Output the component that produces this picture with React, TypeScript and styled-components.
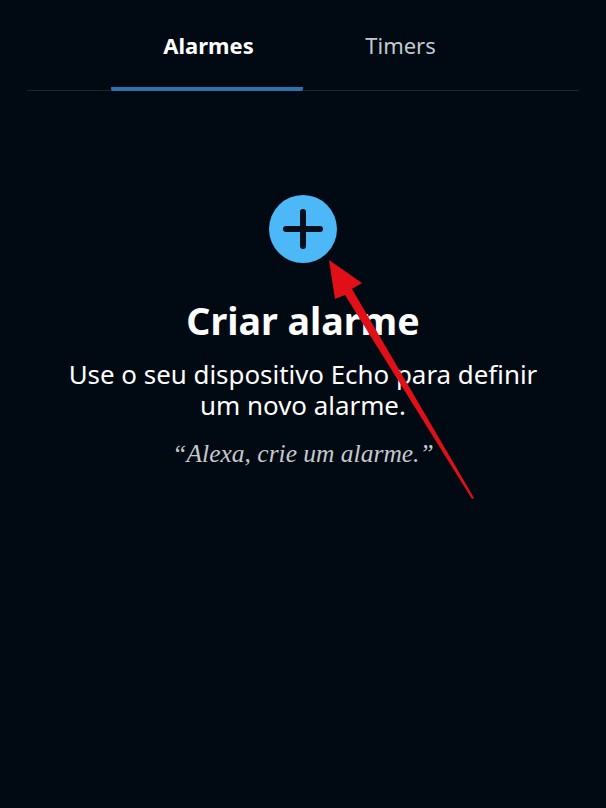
import styled, { createGlobalStyle } from "styled-components";

const GlobalStyle = createGlobalStyle`
  html, body {
    margin: 0;
    padding: 0;
    background: #010912;
  }
`;

const Screen = styled.div`
  position: relative;
  width: 606px;
  height: 808px;
  overflow: hidden;
  background: #010912;
  font-family: "Noto Sans", "Open Sans", sans-serif;
  color: #fff;
`;

const Tabs = styled.nav`
  display: flex;
  margin: 0 27px;
  padding-left: 84px;
  border-bottom: 1px solid #1d252e;
`;

const Tab = styled.div<{ $active?: boolean }>`
  width: 192px;
  height: 91px;
  box-sizing: border-box;
  padding: 30px 0 0 3px;
  margin-bottom: -1px;
  text-align: center;
  font-size: 22px;
  line-height: 30px;
  font-weight: ${(p) => (p.$active ? 700 : 400)};
  color: ${(p) => (p.$active ? "#fff" : "#c3c9d1")};
  border-bottom: ${(p) => (p.$active ? "4px solid #2a73ab" : "none")};
  border-radius: 0 0 2px 2px;
`;

const Empty = styled.section`
  display: flex;
  flex-direction: column;
  align-items: center;
  padding-top: 104px;
  text-align: center;
`;

const AddButton = styled.div`
  display: flex;
  align-items: center;
  justify-content: center;
  width: 68px;
  height: 68px;
  border-radius: 50%;
  background: #4db8f8;
`;

const Title = styled.h1`
  margin: 33px 0 0;
  font-size: 37.6px;
  line-height: 50px;
  font-weight: 700;
`;

const Description = styled.p`
  margin: 13px 0 0;
  width: 490px;
  font-size: 25.9px;
  line-height: 31px;
`;

const Hint = styled.p`
  margin: 17px 0 0;
  font-family: "Liberation Serif", serif;
  font-style: italic;
  font-size: 25.5px;
  line-height: 32px;
  color: #c4c8cc;
`;

const Arrow = styled.svg`
  position: absolute;
  left: 0;
  top: 0;
`;

export default function App() {
  return (
    <Screen>
      <GlobalStyle />
      <Tabs>
        <Tab $active>Alarmes</Tab>
        <Tab>Timers</Tab>
      </Tabs>
      <Empty>
        <AddButton>
          <svg width="40" height="40" viewBox="0 0 40 40">
            <path
              d="M20 3v34M3 20h34"
              stroke="#05101c"
              strokeWidth="6"
              strokeLinecap="round"
              fill="none"
            />
          </svg>
        </AddButton>
        <Title>Criar alarme</Title>
        <Description>Use o seu dispositivo Echo para definir um novo alarme.</Description>
        <Hint>“Alexa, crie um alarme.”</Hint>
      </Empty>
      <Arrow width="606" height="808" viewBox="0 0 606 808">
        <path
          d="M329 260L362 283L352 289L474 498L472 499L345 295L335 299Z"
          fill="#e00f18"
        />
      </Arrow>
    </Screen>
  );
}
